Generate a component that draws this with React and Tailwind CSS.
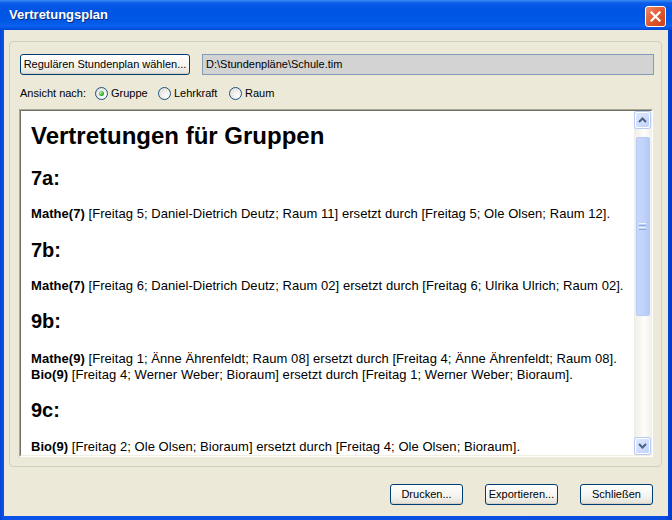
import React from "react";

const ui = { fontFamily: '"Liberation Sans", Arial, sans-serif' };

function XpButton({ children, className = "" }) {
  return (
    <button
      className={`h-[21px] rounded-[3px] border border-[#003C74] bg-[linear-gradient(to_bottom,#FFFFFF_0%,#F4F3EE_60%,#E3E1D6_100%)] text-[11px] text-black shadow-[inset_0_-1px_0_#D6D0C5] ${className}`}
      style={ui}
    >
      {children}
    </button>
  );
}

function Radio({ checked, label, className = "" }) {
  return (
    <label className={`flex items-center ${className}`}>
      <span className="flex h-[13px] w-[13px] items-center justify-center rounded-full border border-[#1C5180] bg-[radial-gradient(circle_at_70%_70%,#FFFFFF_0%,#F0EFEA_40%,#DCDBD3_100%)]">
        {checked && (
          <span className="h-[5px] w-[5px] rounded-full bg-[radial-gradient(circle_at_35%_35%,#A8F0A0_0%,#21A121_70%)]" />
        )}
      </span>
      <span className="ml-[3px] text-[11px] text-black">{label}</span>
    </label>
  );
}

function Arrow({ up }) {
  return (
    <svg width="9" height="6" viewBox="0 0 9 6">
      <path
        d={up ? "M1 5 L4.5 1.5 L8 5" : "M1 1 L4.5 4.5 L8 1"}
        fill="none"
        stroke="#4D6185"
        strokeWidth="2"
      />
    </svg>
  );
}

function ScrollButton({ up }) {
  return (
    <div className="flex h-[16px] w-[15px] items-center justify-center rounded-[2px] border border-[#FFFFFF] bg-[linear-gradient(to_bottom_right,#E0E8FE,#C1D3FB)] shadow-[0_0_0_1px_#B7CAF5]">
      <Arrow up={up} />
    </div>
  );
}

function Entry({ subject, text }) {
  return (
    <div>
      <b>{subject}</b> {text}
    </div>
  );
}

export default function App() {
  return (
    <div
      className="flex h-[520px] w-[672px] flex-col bg-[linear-gradient(to_right,#0842D3,#0A52E8_3px,#0A4DE0_99%,#0638C0)]"
      style={ui}
    >
      {/* title bar */}
      <div className="relative flex h-[30px] shrink-0 items-center bg-[linear-gradient(to_bottom,#3C8CF5_0px,#0A5CE8_3px,#0054E3_10px,#0058E6_22px,#0A62EE_26px,#0048D8_30px)] pl-[9px]">
        <span className="text-[13px] font-bold text-white [text-shadow:1px_1px_0_#0A2A80]">
          Vertretungsplan
        </span>
        <div className="absolute right-[6px] top-[6px] flex h-[21px] w-[21px] items-center justify-center rounded-[3px] border border-white bg-[linear-gradient(to_bottom_right,#F08A6A,#E05A30_50%,#C8401A)]">
          <svg width="11" height="11" viewBox="0 0 11 11">
            <path d="M1.5 1.5 L9.5 9.5 M9.5 1.5 L1.5 9.5" stroke="#FFFFFF" strokeWidth="2.2" strokeLinecap="square" />
          </svg>
        </div>
      </div>

      {/* client area */}
      <div className="mx-[4px] mb-[4px] flex flex-1 flex-col bg-[#ECE9D8] pl-[5px] pr-[6px] pt-[11px]">
        <div className="flex h-[426px] flex-col rounded-[4px] border border-[#D0D0BF] pl-[9px] pr-[7px] pt-[12px]">
          <div className="flex items-center">
            <XpButton className="ml-[1px] w-[170px]">Regulären Stundenplan wählen...</XpButton>
            <div className="ml-[12px] flex h-[21px] flex-1 items-center border border-[#7F9DB9] bg-[#D3D3D3] pl-[3px] text-[11px] text-black">
              D:\Stundenpläne\Schule.tim
            </div>
          </div>

          <div className="mt-[11px] flex h-[14px] items-center text-[11px] text-black">
            <span className="ml-[1px] w-[75px]">Ansicht nach:</span>
            <Radio checked label="Gruppe" className="w-[63px]" />
            <Radio label="Lehrkraft" className="w-[71px]" />
            <Radio label="Raum" />
          </div>

          <div className="mt-[9px] h-[348px] border border-b-white border-l-[#ACA899] border-r-white border-t-[#ACA899] mr-[1px]">
            <div className="flex h-full border border-b-[#F1EFE2] border-l-[#716F64] border-r-[#F1EFE2] border-t-[#716F64] bg-white">
              <div className="flex-1 overflow-hidden pl-[10px] pt-[11px] text-[13px] leading-[16px] tracking-[0.05px] text-black">
                <div className="text-[24px] font-bold leading-[28px] tracking-normal">Vertretungen für Gruppen</div>
                <div className="mt-[16px] text-[20px] font-bold leading-[24px] tracking-normal">7a:</div>
                <div className="mt-[16px]">
                  <Entry subject="Mathe(7)" text="[Freitag 5; Daniel-Dietrich Deutz; Raum 11] ersetzt durch [Freitag 5; Ole Olsen; Raum 12]." />
                </div>
                <div className="mt-[16px] text-[20px] font-bold leading-[24px] tracking-normal">7b:</div>
                <div className="mt-[16px]">
                  <Entry subject="Mathe(7)" text="[Freitag 6; Daniel-Dietrich Deutz; Raum 02] ersetzt durch [Freitag 6; Ulrika Ulrich; Raum 02]." />
                </div>
                <div className="mt-[15px] text-[20px] font-bold leading-[24px] tracking-normal">9b:</div>
                <div className="mt-[18px]">
                  <Entry subject="Mathe(9)" text="[Freitag 1; Änne Ährenfeldt; Raum 08] ersetzt durch [Freitag 4; Änne Ährenfeldt; Raum 08]." />
                  <Entry subject="Bio(9)" text="[Freitag 4; Werner Weber; Bioraum] ersetzt durch [Freitag 1; Werner Weber; Bioraum]." />
                </div>
                <div className="mt-[15px] text-[20px] font-bold leading-[24px] tracking-normal">9c:</div>
                <div className="mt-[17px]">
                  <Entry subject="Bio(9)" text="[Freitag 2; Ole Olsen; Bioraum] ersetzt durch [Freitag 4; Ole Olsen; Bioraum]." />
                </div>
              </div>

              {/* scrollbar */}
              <div className="flex w-[17px] flex-col items-center bg-[linear-gradient(to_right,#EEEDE5,#FDFDFA_60%,#F3F1EC)] py-[1px]">
                <ScrollButton up />
                <div className="flex w-full flex-1 flex-col items-center pt-[9px]">
                  <div className="flex h-[179px] w-[14px] flex-col items-center justify-center rounded-[2px] border border-[#B6CAF4] bg-[linear-gradient(to_right,#C8D7FC,#BFD2FB_60%,#B4C8F6)]">
                    <div className="flex flex-col gap-[1px]">
                      <div className="h-px w-[7px] bg-[#EEF3FE]" />
                      <div className="h-px w-[7px] bg-[#8CA7E4]" />
                      <div className="h-px w-[7px] bg-[#EEF3FE]" />
                      <div className="h-px w-[7px] bg-[#8CA7E4]" />
                    </div>
                  </div>
                </div>
                <ScrollButton />
              </div>
            </div>
          </div>
        </div>

        <div className="mt-[17px] flex justify-end gap-[22px] pr-[9px]">
          <XpButton className="w-[73px]">Drucken...</XpButton>
          <XpButton className="w-[73px]">Exportieren...</XpButton>
          <XpButton className="w-[73px]">Schließen</XpButton>
        </div>
      </div>
    </div>
  );
}
